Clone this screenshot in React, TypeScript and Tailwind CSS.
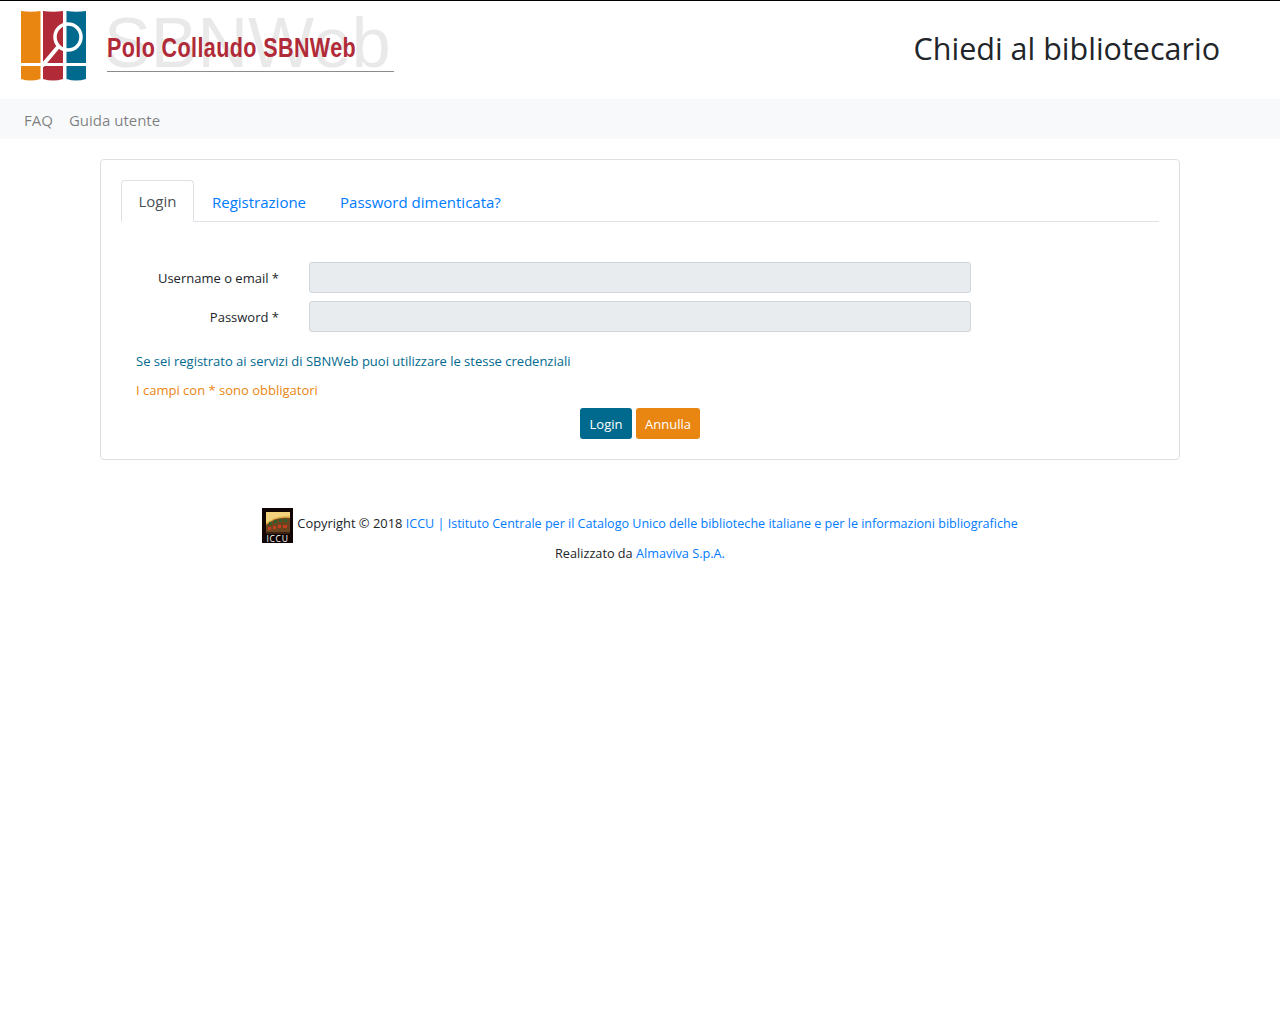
function BooksLogo() {
  return (
    <svg width="68" height="72" viewBox="0 0 68 72" className="shrink-0">
      {/* spines */}
      <path d="M1 0q10 1.500 19.500 0V52H1z" fill="#e98511" />
      <path d="M23 0q10 1.500 20 0V52H23z" fill="#b02a37" />
      <path d="M46.500 0q10 1.500 19.500 0V52H46.500z" fill="#006a8e" />
      {/* bottoms */}
      <path d="M1 55h19.500v13q-10 3-19.500 0z" fill="#e98511" />
      <path d="M23 55h20v13q-10 3-20 0z" fill="#b02a37" />
      <path d="M46.500 55h19.500v13q-10 3-19.500 0z" fill="#006a8e" />
      {/* magnifier */}
      <circle cx="48" cy="26" r="13" fill="none" stroke="#fff" strokeWidth="3.500" />
      <path d="M38 36L22 55" stroke="#fff" strokeWidth="4" />
    </svg>
  );
}

function IccuLogo() {
  return (
    <svg width="31" height="35" viewBox="0 0 31 35" className="shrink-0">
      <rect width="31" height="35" fill="#100404" />
      <rect x="4" y="4" width="24" height="22" fill="#e3b04b" />
      <path d="M4 4h24v4q-14-1-24 7z" fill="#f3d27e" />
      <path d="M4 17q10-9 24-7v16H4z" fill="#6b4420" />
      <path d="M7 14h3v3H7zM12 12h3v3h-3zM17 11h3v3h-3zM22 11h3v3h-3z" fill="#2f5f2a" />
      <path d="M6 19h3v3H6zM11 18h3v3h-3zM16 17h3v3h-3zM21 17h4v3h-4z" fill="#c2401f" />
      <path d="M4 24h24v2H4z" fill="#3a2410" />
      <text x="15.500" y="33.500" fontSize="8.500" fill="#fff" textAnchor="middle" letterSpacing="0.7" fontFamily="Open Sans, sans-serif">ICCU</text>
    </svg>
  );
}

export default function App() {
  return (
    <div className="min-h-[1024px] bg-white font-['Open_Sans',sans-serif] text-[#212529]">
      {/* Header */}
      <div className="h-[99px] border-t border-black flex items-start justify-between pl-5 pr-[60px]">
        <div className="flex pt-[10px]">
          <BooksLogo />
          <div className="relative ml-[19px] w-[287px] h-[61px] border-b border-[#8b8b8b]">
            <span className="absolute -left-[3px] -top-[4px] text-[70px] leading-[72px] text-[#e9e9e9] font-['Liberation_Sans',sans-serif]">SBNWeb</span>
            <span className="absolute left-0 top-[19px] text-[27px] leading-[36px] font-bold text-[#b02a37] font-['Liberation_Sans',sans-serif] tracking-[0.5px] whitespace-nowrap scale-x-[0.797] origin-left">Polo Collaudo SBNWeb</span>
          </div>
        </div>
        <h1 className="mt-[26px] text-[30.500px] leading-[42px]">Chiedi al bibliotecario</h1>
      </div>

      {/* Nav */}
      <nav className="h-10 bg-[#f8f9fa] flex items-center pl-6 pt-[2px] gap-4 text-[15px] text-[#00000080]">
        <a>FAQ</a>
        <a>Guida utente</a>
      </nav>

      {/* Card */}
      <div className="mx-[100px] mt-5 h-[301px] border border-[#dfdfdf] rounded-[4px] p-5">
        <div className="flex h-[42px] border-b border-[#dee2e6] text-[15px]">
          <a className="w-[73px] h-[42px] flex items-center justify-center bg-white border border-[#dee2e6] border-b-white rounded-t-[4px] text-[#495057]">Login</a>
          <a className="h-[41px] px-[17px] pt-[3px] flex items-center text-[#007bff] ml-px">Registrazione</a>
          <a className="h-[41px] px-[17px] pt-[3px] flex items-center text-[#007bff]">Password dimenticata?</a>
        </div>

        <div className="mt-10 flex flex-col gap-2 text-[13px]">
          <div className="flex items-center h-[31px]">
            <label className="w-[158px] text-right pt-[2px]">Username o email *</label>
            <input disabled className="ml-[30px] w-[662px] h-[31px] bg-[#e9ecef] border border-[#ced4da] rounded-[3px]" />
          </div>
          <div className="flex items-center h-[31px]">
            <label className="w-[158px] text-right pt-[2px]">Password *</label>
            <input disabled className="ml-[30px] w-[662px] h-[31px] bg-[#e9ecef] border border-[#ced4da] rounded-[3px]" />
          </div>
        </div>

        <p className="mt-[19px] ml-[15px] text-[13px] leading-[21px] text-[#006a8e]">Se sei registrato ai servizi di SBNWeb puoi utilizzare le stesse credenziali</p>
        <p className="mt-2 ml-[15px] text-[13px] leading-[21px] text-[#e98511]">I campi con * sono obbligatori</p>

        <div className="mt-[7px] flex justify-center gap-1 text-[13px]">
          <button className="h-[31px] w-[52px] pt-[2px] rounded-[3px] bg-[#006a8e] text-white">Login</button>
          <button className="h-[31px] w-[64px] pt-[2px] rounded-[3px] bg-[#e98511] text-white">Annulla</button>
        </div>
      </div>

      {/* Footer */}
      <footer className="mt-12 text-[12.900px]">
        <div className="flex items-center justify-center">
          <IccuLogo />
          <span className="ml-1 mb-[3px]">Copyright © 2018 <a className="text-[12.550px] text-[#007bff]">ICCU | Istituto Centrale per il Catalogo Unico delle biblioteche italiane e per le informazioni bibliografiche</a></span>
        </div>
        <p className="text-center leading-[21px] text-[12.700px]">Realizzato da <a className="text-[#007bff]">Almaviva S.p.A.</a></p>
      </footer>
    </div>
  );
}
